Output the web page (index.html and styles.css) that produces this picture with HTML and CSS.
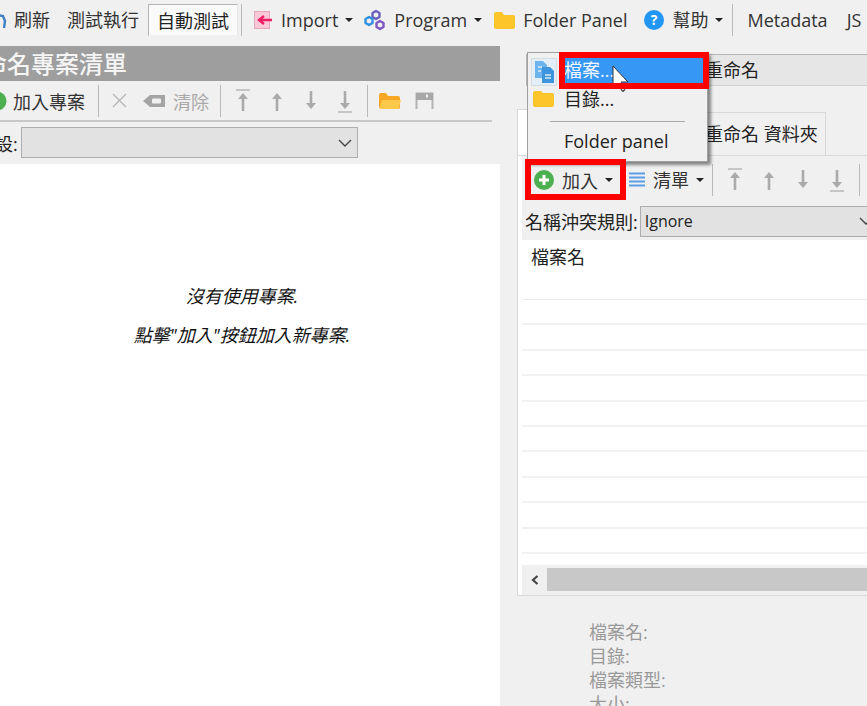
FILE: index.html
```html
<!DOCTYPE html>
<html lang="zh-Hant">
<head>
<meta charset="UTF-8">
<title>命名專案清單</title>
<link rel="stylesheet" href="styles.css">
</head>
<body>
<div class="app">
  <div class="topbar">
    <svg class="refresh-icon" width="10" height="20" viewBox="0 0 10 20"><path d="M-3 5l6 1 2 5-1 7" fill="none" stroke="#3f7fc4" stroke-width="2.400"/></svg>
    <span class="tb-item refresh">刷新</span>
    <span class="tb-item run">測試執行</span>
    <span class="tb-item auto">自動測試</span>
    <span class="sep top-sep"></span>
    <svg class="import-icon" width="18" height="20" viewBox="0 0 18 20"><rect x="0.5" y="1.5" width="15" height="17" fill="#fbc8d8" stroke="#e3a8bb"/><path d="M18 10H6M10 6l-5 4 5 4" fill="none" stroke="#ee1c63" stroke-width="2.4"/></svg>
    <span class="tb-item import">Import</span><i class="caret"></i>
    <svg class="program-icon" width="22" height="22" viewBox="0 0 22 22"><g fill="none" stroke-width="2.400" stroke-linejoin="round"><path d="M12 2l3.500 2v4L12 10 8.500 8V4z" stroke="#6a5fc1"/><path d="M5 8l3.500 2v4L5 16l-3.500-2v-4z" stroke="#2f8fe0"/><path d="M16 12l3.500 2v4L16 20l-3.500-2v-4z" stroke="#7e57c2"/></g></svg>
    <span class="tb-item program">Program</span><i class="caret"></i>
    <svg class="folder top-folder" width="21" height="20" viewBox="0 0 21 20"><path d="M0 4q0-2 2-2h6l2 3h9q2 0 2 2v10q0 2-2 2H2q-2 0-2-2z" fill="#fcc52a"/></svg>
    <span class="tb-item panel">Folder Panel</span>
    <svg class="help-icon" width="20" height="20" viewBox="0 0 20 20"><circle cx="10" cy="10" r="10" fill="#2196f3"/><text x="10" y="15" class="help-mark">?</text></svg>
    <span class="tb-item help">幫助</span><i class="caret"></i>
    <span class="sep help-sep"></span>
    <span class="tb-item meta">Metadata</span>
    <span class="tb-item js">JS</span>
  </div>

  <div class="main">
    <section class="left">
      <h2 class="title">命名專案清單</h2>
      <div class="bar left-bar">
        <svg class="add-cut" width="7" height="20" viewBox="0 0 7 20"><circle cx="-3" cy="10" r="9.5" fill="#4caf50"/></svg>
        <span class="bar-text add-project">加入專案</span>
        <span class="sep bar-sep"></span>
        <svg class="x-icon" width="15" height="15" viewBox="0 0 15 15"><path d="M1 1l13 13M14 1L1 14" stroke="#b4b4b4" stroke-width="1.2"/></svg>
        <svg class="eraser" width="23" height="14" viewBox="0 0 23 14"><path d="M7 1h15v12H7L0 7z" fill="#a4a4a4"/><rect x="9" y="4.500" width="9" height="5" rx="1" fill="#f0f0f0"/></svg>
        <span class="bar-text muted">清除</span>
        <span class="sep bar-sep clear-sep"></span>
        <svg class="arrow first" width="16" height="26" viewBox="0 0 16 26"><use href="#a-top"/></svg>
        <svg class="arrow" width="16" height="26" viewBox="0 0 16 26"><use href="#a-up"/></svg>
        <svg class="arrow" width="16" height="26" viewBox="0 0 16 26"><use href="#a-down"/></svg>
        <svg class="arrow" width="16" height="26" viewBox="0 0 16 26"><use href="#a-bottom"/></svg>
        <span class="sep bar-sep move-sep"></span>
        <svg class="open-folder" width="22" height="18" viewBox="0 0 22 18"><path d="M0 3q0-2 2-2h5l2 3h10q2 0 2 2v9q0 2-2 2H3q-3 0-3-3z" fill="#f9a825"/><path d="M3 8h19l-2 7q-.5 2-2 2H3q-2 0-2-2z" fill="#fdc94a"/></svg>
        <svg class="save" width="19" height="18" viewBox="0 0 19 18"><path d="M1.500 17V1.500h16V17" fill="none" stroke="#b4b4b4" stroke-width="2"/><path d="M1 1h17v7H1z" fill="#a8a8a8"/><rect x="11" y="2.500" width="2" height="3" fill="#f0f0f0"/></svg>
      </div>
      <div class="preset">
        <span class="preset-label">設:</span>
        <div class="combo empty"><svg class="chev" width="14" height="8" viewBox="0 0 14 8"><path d="M1 1l6 6 6-6" fill="none" stroke="#444" stroke-width="1.400"/></svg></div>
      </div>
      <div class="empty-list">
        <p>沒有使用專案.</p>
        <p>點擊"加入"按鈕加入新專案.</p>
      </div>
    </section>

    <section class="right">
      <div class="rule-tabs">重命名</div>
      <div class="file-tabs">
        <span class="first-tab"></span>
        <span class="second-tab">重命名 資料夾</span>
      </div>
      <div class="file-panel">
        <div class="bar file-bar">
          <svg class="add-icon" width="20" height="20" viewBox="0 0 20 20"><circle cx="10" cy="10" r="10" fill="#4caf50"/><path d="M10 5v10M5 10h10" stroke="#fff" stroke-width="3"/></svg>
          <span class="bar-text add-text">加入</span><i class="caret"></i>
          <svg class="list-icon" width="16" height="16" viewBox="0 0 16 16"><path d="M0 1.500h16M0 5.500h16M0 9.500h16M0 13.500h16" stroke="#5c9ee6" stroke-width="2"/></svg>
          <span class="bar-text list-text">清單</span><i class="caret"></i>
          <span class="sep bar-sep"></span>
          <svg class="arrow first" width="16" height="26" viewBox="0 0 16 26"><use href="#a-top"/></svg>
          <svg class="arrow" width="16" height="26" viewBox="0 0 16 26"><use href="#a-up"/></svg>
          <svg class="arrow" width="16" height="26" viewBox="0 0 16 26"><use href="#a-down"/></svg>
          <svg class="arrow" width="16" height="26" viewBox="0 0 16 26"><use href="#a-bottom"/></svg>
          <span class="sep bar-sep end-sep"></span>
        </div>
        <div class="conflict">
          <span class="conflict-label">名稱沖突規則:</span>
          <div class="combo">Ignore<svg class="chev" width="14" height="8" viewBox="0 0 14 8"><path d="M1 1l6 6 6-6" fill="none" stroke="#444" stroke-width="1.400"/></svg></div>
        </div>
        <div class="file-list">
          <div class="list-head">檔案名</div>
          <div class="list-row"></div>
          <div class="list-row"></div>
          <div class="list-row"></div>
          <div class="list-row"></div>
          <div class="list-row"></div>
          <div class="list-row"></div>
          <div class="list-row"></div>
          <div class="list-row"></div>
          <div class="list-row"></div>
          <div class="list-row"></div>
        </div>
        <div class="hscroll">
          <span class="scroll-btn"><svg width="10" height="10" viewBox="0 0 10 10"><path d="M7.500 1L3 5l4.500 4" fill="none" stroke="#444" stroke-width="2.200"/></svg></span>
          <span class="scroll-thumb"></span>
        </div>
      </div>
      <div class="info">
        <div>檔案名:</div>
        <div>目錄:</div>
        <div>檔案類型:</div>
        <div>大小:</div>
      </div>
    </section>
  </div>

  <div class="menu">
    <div class="menu-icon-cell">
      <svg width="19" height="22" viewBox="0 0 19 22"><path d="M0 0h8l4 4v13H0z" fill="#6db4ee"/><path d="M7 6h8l4 4v12H7z" fill="#3f95dd"/><path d="M3 6h4M3 10h3M10 14h6M10 17h6" stroke="#d9ecfb" stroke-width="1.300"/></svg>
    </div>
    <div class="menu-item active">檔案...</div>
    <div class="menu-item">
      <svg class="menu-folder" width="21" height="17" viewBox="0 0 21 17"><path d="M0 3q0-2 2-2h6l2 2h9q2 0 2 2v10q0 2-2 2H2q-2 0-2-2z" fill="#fcc52a"/></svg>
      目錄...
    </div>
    <div class="menu-line"></div>
    <div class="menu-item">Folder panel</div>
  </div>
  <svg class="cursor" width="20" height="28" viewBox="0 0 20 28"><path d="M1 1v21l5-4 4 8 3-1-4-8h7z" fill="#fff" stroke="#333"/><circle cx="11" cy="25" r="1.500" fill="none" stroke="#666"/></svg>
  <div class="mark mark-file"></div>
  <div class="mark mark-add"></div>
</div>

<svg class="defs" width="0" height="0">
  <defs>
    <g id="a-up"><path d="M8 23V9" stroke="#aaa" stroke-width="2.600"/><path d="M3 11l5-6 5 6z" fill="#aaa"/></g>
    <g id="a-top"><path d="M1 2h14" stroke="#aaa" stroke-width="1.200"/><path d="M8 23V10" stroke="#aaa" stroke-width="2.600"/><path d="M3 11l5-6 5 6z" fill="#aaa"/></g>
    <g id="a-down"><path d="M8 3v14" stroke="#aaa" stroke-width="2.600"/><path d="M3 15l5 6 5-6z" fill="#aaa"/></g>
    <g id="a-bottom"><path d="M1 24h14" stroke="#aaa" stroke-width="1.200"/><path d="M8 3v13" stroke="#aaa" stroke-width="2.600"/><path d="M3 15l5 6 5-6z" fill="#aaa"/></g>
  </defs>
</svg>
</body>
</html>
```

FILE: styles.css
```css
* {
  box-sizing: border-box;
}

html, body {
  margin: 0;
  padding: 0;
  height: 100%;
  overflow: hidden;
}

body {
  font-family: "Open Sans", "Noto Sans CJK TC", sans-serif;
  font-size: 18px;
  color: #333;
  background: #f0f0f0;
}

.app {
  position: relative;
  width: 867px;
  height: 706px;
  overflow: hidden;
}

.defs {
  position: absolute;
}

/* top toolbar */
.topbar {
  display: flex;
  align-items: center;
  height: 38px;
  padding-top: 1px;
  white-space: nowrap;
}

.tb-item {
  line-height: 20px;
}

.refresh-icon {
  flex: none;
}

.refresh { margin-left: 4px; }
.run { margin-left: 17px; }

.auto {
  flex: none;
  width: 90px;
  height: 32px;
  margin-left: 9px;
  padding-top: 6px;
  text-align: center;
  color: #222;
  background: #fafafa;
  border: 1px solid #b5b5b5;
  border-bottom-color: #f0f0f0;
  border-right-color: #e8e8e8;
}

.sep {
  flex: none;
  display: block;
  width: 1px;
  height: 32px;
  background: #b9b9b9;
}

.top-sep { margin-left: 3px; }
.import-icon { flex: none; margin-left: 12px; }
.import { margin-left: 9px; }

.caret {
  flex: none;
  width: 0;
  height: 0;
  margin-left: 7px;
  border-left: 4px solid transparent;
  border-right: 4px solid transparent;
  border-top: 4px solid #222;
}

.program-icon { flex: none; margin-left: 11px; }
.program { margin-left: 8px; }
.top-folder { flex: none; margin-left: 12px; }
.panel { margin-left: 8px; }
.help-icon { flex: none; margin-left: 17px; }

.help-mark {
  font-size: 14px;
  font-weight: 700;
  fill: #fff;
  text-anchor: middle;
}

.help { margin-left: 8px; }
.help-sep { margin-left: 9px; }
.meta { margin-left: 14px; }
.js { margin-left: 19px; }

/* main area */
.main {
  display: grid;
  grid-template-columns: 500px 367px;
  height: 668px;
  padding-top: 8px;
}

.left {
  display: flex;
  flex-direction: column;
  min-width: 0;
}

.title {
  height: 35px;
  margin: 0;
  text-indent: -17px;
  font-size: 24px;
  font-weight: 500;
  line-height: 35px;
  color: #f5f5f5;
  background: #9e9e9e;
  white-space: nowrap;
}

.bar {
  display: flex;
  align-items: center;
  white-space: nowrap;
}

.left-bar {
  height: 41px;
  margin-right: 8px;
  border-bottom: 2px solid #c8c8c8;
}

.add-cut { flex: none; }
.add-project { margin-left: 6px; }
.bar-sep { height: 32px; }
.left-bar .bar-sep { margin-left: 13px; }
.x-icon { flex: none; margin-left: 13px; }
.eraser { flex: none; margin-left: 16px; }
.muted { margin-left: 7px; color: #aaa; }
.left-bar .clear-sep { margin-left: 11px; }

.arrow {
  flex: none;
  margin-left: 18px;
}

.arrow.first { margin-left: 14px; }
.left-bar .move-sep { margin-left: 14px; }
.open-folder { flex: none; margin-left: 11px; }
.save { flex: none; margin-left: 14px; }

.preset {
  display: flex;
  align-items: center;
  height: 42px;
  padding-bottom: 1px;
}

.preset-label {
  flex: none;
  margin-left: -5px;
  color: #222;
}

.combo {
  flex: none;
  height: 31px;
  padding-left: 4px;
  font-size: 16px;
  color: #222;
  background: #e2e2e2;
  border: 1px solid #adadad;
}

.combo.empty {
  display: flex;
  align-items: center;
  justify-content: flex-end;
  width: 337px;
  margin-left: 3px;
  padding-right: 5px;
}

.empty-list {
  flex: 1;
  padding: 120px 16px 0 0;
  font-size: 18px;
  font-style: italic;
  text-align: center;
  color: #111;
  background: #fff;
}

.empty-list p {
  margin: 0 0 15px;
  line-height: 24px;
}

/* right column */
.right {
  min-width: 0;
  padding: 8px 0 0 17px;
}

.rule-tabs {
  height: 32px;
  margin-left: 9px;
  padding-left: 178px;
  line-height: 31px;
  color: #222;
  background: #e6e6e6;
  border-top: 1px solid #b5b5b5;
  border-left: 1px solid #b5b5b5;
  border-bottom: 1px solid #d0d0d0;
  white-space: nowrap;
}

.file-tabs {
  display: flex;
  align-items: flex-end;
  height: 45px;
  margin-top: 24px;
}

.first-tab {
  flex: none;
  width: 174px;
  height: 46px;
  background: #fff;
  border: 1px solid #d8d8d8;
  border-bottom: 0;
}

.second-tab {
  flex: none;
  width: 135px;
  height: 43px;
  padding: 7px 0 0 14px;
  color: #222;
  background: #f0f0f0;
  border: 1px solid #d8d8d8;
  border-left: 0;
  border-bottom: 0;
  white-space: nowrap;
}

.file-panel {
  height: 441px;
  padding-left: 4px;
  background: #f0f0f0;
  border: 1px solid #d8d8d8;
  border-right: 0;
  box-shadow: inset 4px 0 0 #fff;
}

.file-bar {
  height: 43px;
  padding: 5px 0 0 12px;
}

.add-icon { flex: none; }
.add-text { margin-left: 8px; }
.list-icon { flex: none; margin-left: 16px; }
.list-text { margin: -3px 0 0 8px; }
.file-bar .bar-sep { margin-left: 8px; }
.file-bar .end-sep { margin-left: 14px; }

.conflict {
  display: flex;
  align-items: center;
  height: 41px;
  padding: 3px 0 0 3px;
  white-space: nowrap;
}

.conflict-label { color: #222; }

.conflict .combo {
  display: flex;
  align-items: center;
  justify-content: space-between;
  width: 240px;
  margin-left: 2px;
  padding-right: 6px;
}

.file-list {
  height: 325px;
  background: #fff;
}

.list-head {
  height: 60px;
  padding: 4px 0 0 9px;
  line-height: 26px;
  color: #222;
  border-bottom: 1px solid #ececec;
}

.list-row {
  height: 25.400px;
  border-bottom: 2px solid #f1f1f1;
}

.hscroll {
  display: flex;
  height: 23px;
  margin-top: 3px;
}

.scroll-btn {
  display: flex;
  align-items: center;
  justify-content: center;
  flex: none;
  width: 25px;
}

.scroll-thumb {
  flex: 1;
  background: #c8c8c8;
}

.info {
  padding: 24px 0 0 72px;
  line-height: 24px;
  color: #999;
}

/* popup menu */
.menu {
  position: absolute;
  left: 527px;
  top: 52px;
  width: 181px;
  height: 110px;
  padding: 2px 0 0 1px;
  background: #f0f0f0;
  border: 1px solid #a0a0a0;
  box-shadow: 3px 3px 3px rgba(0, 0, 0, 0.45);
}

.menu-icon-cell {
  position: absolute;
  left: 3px;
  top: 5px;
  display: flex;
  align-items: center;
  justify-content: center;
  width: 26px;
  height: 28px;
  background: #e4eef8;
  border: 1px solid #d5dde5;
}

.menu-item {
  position: relative;
  height: 29px;
  padding-left: 35px;
  line-height: 29px;
  color: #222;
  white-space: nowrap;
}

.menu-item.active {
  height: 30px;
  margin-left: 33px;
  padding-left: 2px;
  line-height: 30px;
  color: #f2f7ff;
  background: #3797f5;
}

.menu-folder {
  position: absolute;
  left: 4px;
  top: 5px;
}

.menu-line {
  height: 1px;
  margin: 7px 22px 5px 21px;
  background: #a8a8a8;
}

/* red marks and pointer lie over the screenshot */
.mark {
  position: absolute;
  border: 6px solid #f00;
}

.mark-file {
  left: 559px;
  top: 52px;
  width: 150px;
  height: 37px;
}

.mark-add {
  left: 525px;
  top: 159px;
  width: 101px;
  height: 41px;
}

.cursor {
  position: absolute;
  left: 612px;
  top: 65px;
}
```
